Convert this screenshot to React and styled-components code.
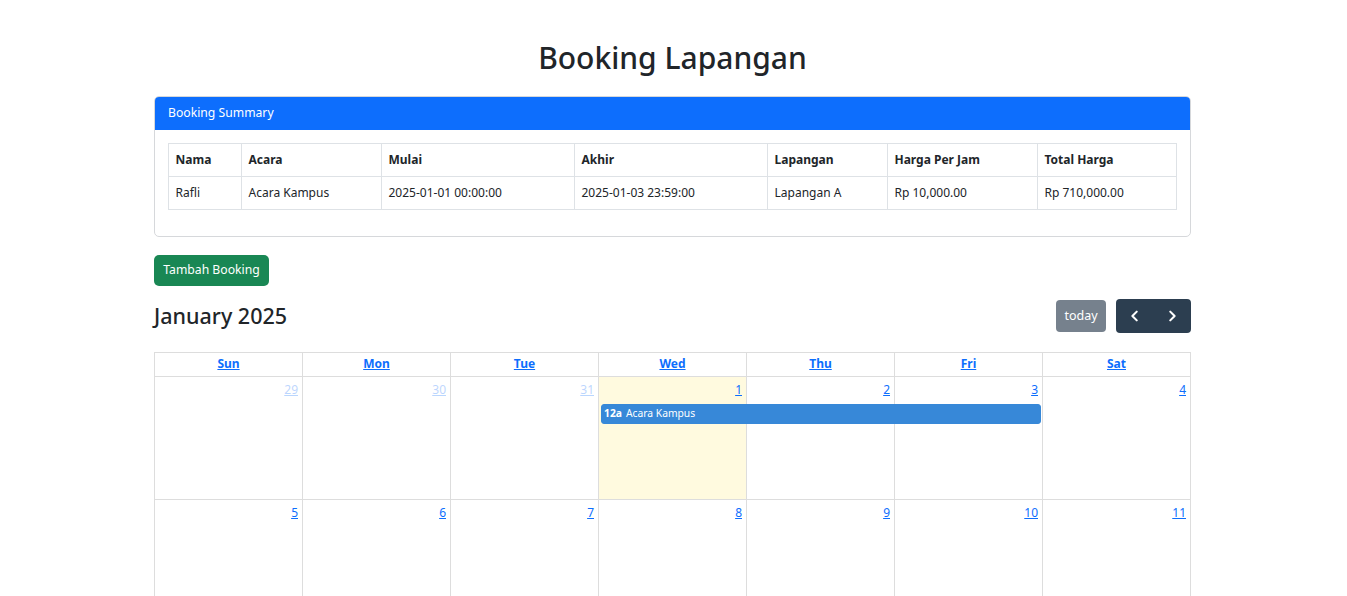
import React from 'react';
import styled, { createGlobalStyle } from 'styled-components';

const GlobalStyle = createGlobalStyle`
  * { box-sizing: border-box; }
  body {
    margin: 0;
    background: #fff;
    color: #212529;
    font-family: "Segoe UI", "Noto Sans", "Open Sans", sans-serif;
    font-size: 12px;
    line-height: 1.5;
  }
`;

const Page = styled.div`
  width: 1039px;
  margin: 0 auto;
  padding: 40px 2px 0 0;
`;

const Title = styled.h1`
  margin: 0 0 20px 0;
  text-align: center;
  font-size: 30px;
  font-weight: 500;
  line-height: 1.2;
`;

const Card = styled.div`
  border: 1px solid #d6d8db;
  border-radius: 5px;
  overflow: hidden;
`;

const CardHeader = styled.div`
  background: #0d6efd;
  color: #fff;
  padding: 6px 13px;
  height: 33px;
  display: flex;
  align-items: center;
  font-size: 12.2px;
`;

const CardBody = styled.div`
  padding: 13px;
`;

const Table = styled.table`
  width: 100%;
  border-collapse: collapse;
  margin-bottom: 13px;
  th, td {
    border: 1px solid #dee2e6;
    padding: 6px 6.5px;
    text-align: left;
    height: 33px;
  }
  th { font-weight: 700; }
`;

const AddButton = styled.button`
  margin-top: 18px;
  background: #198754;
  color: #fff;
  border: none;
  border-radius: 5px;
  height: 31px;
  width: 115px;
  padding: 0;
  font: inherit;
  font-size: 12.2px;
`;

const Toolbar = styled.div`
  display: flex;
  justify-content: space-between;
  align-items: center;
  margin: 13px 0 19px 0;
`;

const MonthTitle = styled.h2`
  margin: 0;
  font-size: 21.5px;
  font-weight: 500;
`;

const Buttons = styled.div`
  display: flex;
  gap: 10px;
  align-items: center;
`;

const TodayButton = styled.button`
  background: #76818d;
  color: #fff;
  border: none;
  border-radius: 4px;
  height: 32px;
  width: 50px;
  padding: 0;
  font: inherit;
  font-size: 12.5px;
`;

const NavGroup = styled.div`
  display: flex;
  background: #2c3e50;
  border-radius: 4px;
  height: 34px;
`;

const NavButton = styled.button`
  width: 37.5px;
  background: transparent;
  border: none;
  display: flex;
  align-items: center;
  justify-content: center;
  padding: 0;
`;

const Calendar = styled.div`
  border-left: 1px solid #ddd;
  border-top: 1px solid #ddd;
`;

const Row = styled.div`
  display: grid;
  grid-template-columns: repeat(7, 1fr);
`;

const HeadCell = styled.div`
  border-right: 1px solid #ddd;
  border-bottom: 1px solid #ddd;
  height: 24px;
  text-align: center;
  font-weight: 700;
  line-height: 22px;
  a { color: #0d6efd; text-decoration: underline; }
`;

const Week = styled.div`
  display: grid;
  grid-template-columns: repeat(7, 1fr);
  grid-template-rows: 26px 21px 1fr;
  height: 123px;
`;

const DayCell = styled.div`
  grid-row: 1 / -1;
  grid-column: ${(p) => p.$col};
  border-right: 1px solid #ddd;
  border-bottom: 1px solid #ddd;
  background: ${(p) => (p.$today ? 'rgba(255, 220, 40, 0.15)' : 'transparent')};
  display: flex;
  justify-content: flex-end;
  align-items: flex-start;
  padding: 5px 4px 0 0;
  a {
    color: #0d6efd;
    text-decoration: underline;
    line-height: 1.3;
    opacity: ${(p) => (p.$other ? 0.28 : 1)};
  }
`;

const Event = styled.div`
  grid-row: 2;
  grid-column: ${(p) => p.$start} / span ${(p) => p.$span};
  margin: 1px 2px 0 2px;
  height: 20px;
  background: #3788d8;
  border: 1px solid #3788d8;
  border-radius: 3px;
  color: #fff;
  font-size: 10.3px;
  display: flex;
  align-items: center;
  gap: 4px;
  padding: 0 2px;
  b { font-weight: 700; }
`;

const days = ['Sun', 'Mon', 'Tue', 'Wed', 'Thu', 'Fri', 'Sat'];
const weeks = [
  [
    { d: 29, other: true },
    { d: 30, other: true },
    { d: 31, other: true },
    { d: 1, today: true },
    { d: 2 },
    { d: 3 },
    { d: 4 },
  ],
  [5, 6, 7, 8, 9, 10, 11].map((d) => ({ d })),
];

const Chevron = ({ dir }) => (
  <svg width="14" height="14" viewBox="0 0 16 16" fill="none" stroke="#fff" strokeWidth="2.4" strokeLinecap="round" strokeLinejoin="round">
    {dir === 'left' ? <path d="M10 3 L5 8 L10 13" /> : <path d="M6 3 L11 8 L6 13" />}
  </svg>
);

export default function App() {
  return (
    <>
      <GlobalStyle />
      <Page>
        <Title>Booking Lapangan</Title>
        <Card>
          <CardHeader>Booking Summary</CardHeader>
          <CardBody>
            <Table>
              <thead>
                <tr>
                  <th style={{ width: 73 }}>Nama</th>
                  <th style={{ width: 140 }}>Acara</th>
                  <th style={{ width: 193 }}>Mulai</th>
                  <th style={{ width: 193 }}>Akhir</th>
                  <th style={{ width: 120 }}>Lapangan</th>
                  <th style={{ width: 150 }}>Harga Per Jam</th>
                  <th>Total Harga</th>
                </tr>
              </thead>
              <tbody>
                <tr>
                  <td>Rafli</td>
                  <td>Acara Kampus</td>
                  <td>2025-01-01 00:00:00</td>
                  <td>2025-01-03 23:59:00</td>
                  <td>Lapangan A</td>
                  <td>Rp 10,000.00</td>
                  <td>Rp 710,000.00</td>
                </tr>
              </tbody>
            </Table>
          </CardBody>
        </Card>

        <AddButton>Tambah Booking</AddButton>

        <Toolbar>
          <MonthTitle>January 2025</MonthTitle>
          <Buttons>
            <TodayButton>today</TodayButton>
            <NavGroup>
              <NavButton><Chevron dir="left" /></NavButton>
              <NavButton><Chevron dir="right" /></NavButton>
            </NavGroup>
          </Buttons>
        </Toolbar>

        <Calendar>
          <Row>
            {days.map((d) => (
              <HeadCell key={d}><a href="#">{d}</a></HeadCell>
            ))}
          </Row>
          {weeks.map((week, wi) => (
            <Week key={wi}>
              {week.map((day, i) => (
                <DayCell key={i} $col={i + 1} $today={day.today} $other={day.other}>
                  <a href="#">{day.d}</a>
                </DayCell>
              ))}
              {wi === 0 && (
                <Event $start={4} $span={3}>
                  <b>12a</b>
                  <span>Acara Kampus</span>
                </Event>
              )}
            </Week>
          ))}
        </Calendar>
      </Page>
    </>
  );
}
